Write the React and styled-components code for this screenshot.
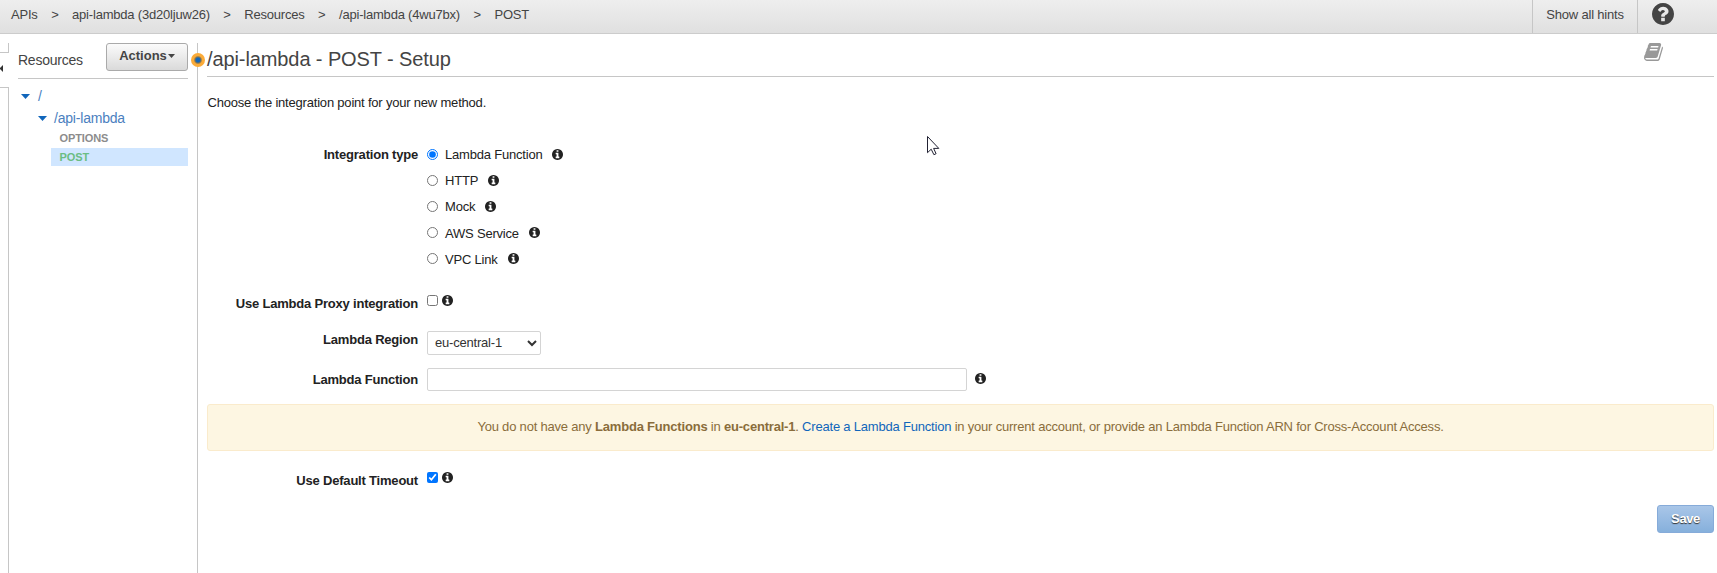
import React from "react";
import styled, { createGlobalStyle } from "styled-components";

const Global = createGlobalStyle`
  * { box-sizing: border-box; }
  html, body { margin: 0; height: 100%; background: #fff; overflow: hidden; }
  body { font: 13px/18px "Liberation Sans", Arial, sans-serif; letter-spacing: -0.2px; color: #222; }
`;

const Page = styled.div`
  height: 573px;
  display: flex;
  flex-direction: column;
`;

const TopBar = styled.header`
  height: 34px;
  flex: none;
  display: flex;
  align-items: stretch;
  background: linear-gradient(#eee, #e0e0e0);
  border-bottom: 1px solid #ccc;
  color: #444;
`;

const Crumbs = styled.nav`
  flex: 1;
  display: flex;
  gap: 13.5px;
  padding: 6px 0 0 11px;
`;

const Hints = styled.div`
  width: 106px;
  border: solid #c6c6c6;
  border-width: 0 1px;
  padding-top: 6px;
  text-align: center;
`;

const Help = styled.div`
  width: 79px;
  padding: 3px 0 0 14px;
  color: #444;
`;

const Icon = styled.svg`
  display: block;
  flex: none;
  width: ${(p) => p.$w}px;
  height: ${(p) => p.$h || p.$w}px;
  fill: currentColor;
`;

const Body = styled.div`
  flex: 1;
  display: flex;
  padding-top: 9px;
`;

const Rail = styled.div`
  width: 9px;
  flex: none;
  display: flex;
  flex-direction: column;
`;

const RailTop = styled.div`
  height: 10px;
  border: solid #c6c6c6;
  border-width: 0 1px 1px 0;
`;

const RailGap = styled.div`
  height: 34px;
  padding-bottom: 4px;
  display: flex;
  align-items: center;
  color: #333;
`;

const RailRest = styled.div`
  flex: 1;
  border: solid #c6c6c6;
  border-width: 1px 1px 0 0;
`;

const Sidebar = styled.aside`
  width: 189px;
  flex: none;
  padding: 0 9px;
  border-right: 1px solid #c6c6c6;
  position: relative;
`;

const SideHead = styled.div`
  height: 36px;
  display: flex;
  justify-content: space-between;
  border-bottom: 1px solid #c6c6c6;
`;

const SideTitle = styled.div`
  padding-top: 8px;
  font-size: 14px;
  letter-spacing: -0.25px;
  color: #444;
`;

const ActionsButton = styled.button`
  width: 82px;
  height: 28px;
  padding: 0 0 3px;
  display: flex;
  align-items: center;
  justify-content: center;
  gap: 1px;
  font: bold 13px "Liberation Sans", Arial, sans-serif;
  letter-spacing: 0;
  color: #444;
  border: 1px solid #aaa;
  border-radius: 3px;
  background: linear-gradient(#fbfbfb, #dadada);
`;

const SplitHandle = styled.span`
  position: absolute;
  right: -8px;
  top: 10px;
  width: 14px;
  height: 14px;
  border-radius: 50%;
  background: radial-gradient(circle, #1166bb 0 2px, #7d7357 3px, #fbab38 4.4px);
`;

const Tree = styled.div`
  padding-top: 6px;
`;

const TreeNode = styled.div`
  height: 22px;
  padding-left: ${(p) => 3 + p.$depth * 17}px;
  display: flex;
  align-items: center;
  gap: ${(p) => 8 - p.$depth}px;
  font-size: 14px;
  letter-spacing: -0.2px;
  color: #4b80c0;
`;

const Method = styled.div`
  height: ${(p) => (p.$selected ? 18 : 19)}px;
  margin-left: 33px;
  padding-left: 8.5px;
  font: bold 11px/18px "Liberation Sans", Arial, sans-serif;
  letter-spacing: -0.1px;
  color: ${(p) => (p.$selected ? "#6bbd83" : "#8c8c8c")};
  background: ${(p) => (p.$selected ? "#d0e6ff" : "none")};
`;

const Main = styled.main`
  flex: 1;
  min-width: 0;
  padding: 0 3px 0 9px;
`;

const TitleRow = styled.div`
  height: 34px;
  display: flex;
  justify-content: space-between;
  border-bottom: 1px solid #c6c6c6;
  color: #999;
`;

const Title = styled.h1`
  margin: 0;
  padding-top: 4px;
  font-size: 20px;
  line-height: 24px;
  font-weight: normal;
  letter-spacing: -0.1px;
  color: #444;
`;

const BookSlot = styled.div`
  padding-right: 51px;
`;

const Intro = styled.p`
  margin: 17px 0 34px;
  padding-left: 0.5px;
`;

const Field = styled.div`
  display: grid;
  grid-template-columns: 211px 1fr;
  column-gap: 9px;
  height: ${(p) => p.$h}px;
`;

const Label = styled.div`
  text-align: right;
  font-weight: bold;
  color: #222;
  padding-top: ${(p) => p.$top || 0}px;
`;

const Options = styled.div`
  display: flex;
  flex-direction: column;
  gap: 8.2px;
`;

const Option = styled.label`
  height: 18px;
  display: flex;
  align-items: center;
`;

const OptionText = styled.span`
  margin: 0 10px 0 7px;
`;

const OptionHint = styled.span`
  padding-bottom: 2px;
`;

const Control = styled.div`
  display: flex;
  align-items: flex-start;
  gap: ${(p) => p.$gap || 4}px;
  padding-top: ${(p) => p.$top || 0}px;
`;

const Radio = styled.input`
  width: 11px;
  height: 11px;
  margin: 0 0 2px;
`;

const Check = styled.input`
  width: 11px;
  height: 11px;
  margin: 0;
`;

const Select = styled.select`
  width: 114px;
  height: 24px;
  padding: 0 0 1px 3px;
  border: 1px solid #d4d4d4;
  border-radius: 2px;
  background: #fff;
  color: #333;
  font: 13px "Liberation Sans", Arial, sans-serif;
  letter-spacing: -0.2px;
`;

const TextInput = styled.input`
  width: 540px;
  height: 23px;
  border: 1px solid #d4d4d4;
  border-radius: 2px;
`;

const IconOffset = styled.span`
  padding-top: ${(p) => p.$top}px;
`;

const Alert = styled.div`
  height: 47px;
  padding-top: 13px;
  text-align: center;
  color: #8a6d3b;
  background: #fdf6e2;
  border: 1px solid #faebcc;
  border-radius: 3px;
  margin-bottom: 21px;
`;

const Link = styled.a`
  color: #1166bb;
`;

const Footer = styled.div`
  display: flex;
  justify-content: flex-end;
`;

const SaveButton = styled.button`
  width: 57px;
  height: 28px;
  padding: 0 0 1px;
  border: 1px solid #86abd9;
  border-radius: 3px;
  background: linear-gradient(#a9c6e8, #86b0dc);
  color: #fff;
  font: bold 13px "Liberation Sans", Arial, sans-serif;
  letter-spacing: -0.4px;
  text-shadow: 0 1px 1px #333;
`;

const Pointer = styled.svg`
  position: absolute;
  left: 927px;
  top: 136px;
  width: 13px;
  height: 20px;
`;

const DISC =
  "M1664 896q0 209-103 385.5t-279.5 279.5-385.5 103-385.5-103-279.5-279.5-103-385.5 103-385.5 279.5-279.5 385.5-103 385.5 103 279.5 279.5 103 385.5z";

const Info = () => (
  <Icon $w={11} viewBox="128 128 1536 1536">
    <path
      fillRule="evenodd"
      d={
        "M1152 1376v-160q0-14-9-23t-23-9h-96v-512q0-14-9-23t-23-9h-320q-14 0-23 9t-9 23v160q0 14 9 23t23 9h96v320h-96q-14 0-23 9t-9 23v160q0 14 9 23t23 9h448q14 0 23-9t9-23zM1024 480v-160q0-14-9-23t-23-9h-192q-14 0-23 9t-9 23v160q0 14 9 23t23 9h192q14 0 23-9t9-23z" +
        DISC
      }
    />
  </Icon>
);

const Question = () => (
  <Icon $w={22} viewBox="128 128 1536 1536">
    <path
      fillRule="evenodd"
      d={
        "M1024 1376v-192q0-14-9-23t-23-9h-192q-14 0-23 9t-9 23v192q0 14 9 23t23 9h192q14 0 23-9t9-23zM1280 704q0-88-55.5-163t-138.5-116-170-41q-243 0-371 213-15 24 8 42l132 100q7 6 19 6 16 0 25-12 53-68 86-92 34-24 86-24 48 0 85.5 26t37.5 59q0 38-20 61t-68 45q-63 28-115.5 86.5t-52.5 125.5v36q0 14 9 23t23 9h192q14 0 23-9t9-23q0-19 21.5-49.5t54.5-49.5q32-18 49-28.5t46-35 44.5-48 28-60.5 12.5-81z" +
        DISC
      }
    />
  </Icon>
);

const Book = () => (
  <Icon $w={19} $h={18} viewBox="62 128 1672 1536" preserveAspectRatio="none">
    <path d="M1703 478q40 57 18 129l-275 906q-19 64-76.5 107.5t-122.5 43.5h-923q-77 0-148.5-53.5t-99.5-131.5q-24-67-2-127 0-4 3-27t4-37q1-8-3-21.5t-3-19.5q2-11 8-21t16.5-23.5 16.5-23.5q23-38 45-91.5t30-91.5q3-10 .5-30t-.5-28q3-11 17-28t17-23q21-36 42-92t25-90q1-9-2.5-32t.5-28q4-13 22-30.5t22-22.5q19-26 42.5-84.5t27.5-96.5q1-8-3-25.5t-2-26.5q2-8 9-18t18-23 17-21q8-12 16.5-30.5t15-35 16-36 19.5-32 26.5-23.5 36-11.5 47.5 5.5l-1 3q38-9 51-9h761q74 0 114 56t18 130l-274 906q-36 119-71.5 153.5t-128.5 34.5h-869q-27 0-38 15-11 16-1 43 24 70 144 70h923q29 0 56-15.5t35-41.5l300-987q7-22 5-57 38 15 59 43zm-1064 2q-4 13 2 22.5t20 9.5h608q13 0 25.5-9.5t16.5-22.5l21-64q4-13-2-22.5t-20-9.5h-608q-13 0-25.5 9.5t-16.5 22.5zm-83 256q-4 13 2 22.5t20 9.5h608q13 0 25.5-9.5t16.5-22.5l21-64q4-13-2-22.5t-20-9.5h-608q-13 0-25.5 9.5t-16.5 22.5z" />
  </Icon>
);

const Caret = ({ w = 9, h = 5 }) => (
  <Icon $w={w} $h={h} viewBox="0 0 8 4" preserveAspectRatio="none">
    <path d="M0 0h8L4 4z" />
  </Icon>
);

const TreeCaret = styled.span`
  color: #1166bb;
`;

const crumbs = ["APIs", "api-lambda (3d20ljuw26)", "Resources", "/api-lambda (4wu7bx)", "POST"];
const types = ["Lambda Function", "HTTP", "Mock", "AWS Service", "VPC Link"];

export default function App() {
  return (
    <Page>
      <Global />
      <TopBar>
        <Crumbs>
          {crumbs.map((c, i) => (
            <React.Fragment key={c}>
              {i > 0 && <span>&gt;</span>}
              <span>{c}</span>
            </React.Fragment>
          ))}
        </Crumbs>
        <Hints>Show all hints</Hints>
        <Help>
          <Question />
        </Help>
      </TopBar>
      <Body>
        <Rail>
          <RailTop />
          <RailGap>
            <Icon $w={3} $h={7} viewBox="0 0 3 7">
              <path d="M3 0v7L0 4V3z" />
            </Icon>
          </RailGap>
          <RailRest />
        </Rail>
        <Sidebar>
          <SideHead>
            <SideTitle>Resources</SideTitle>
            <ActionsButton>
              Actions
              <Caret w={7} h={4} />
            </ActionsButton>
          </SideHead>
          <Tree>
            <TreeNode $depth={0}>
              <TreeCaret><Caret /></TreeCaret>/
            </TreeNode>
            <TreeNode $depth={1}>
              <TreeCaret><Caret /></TreeCaret>/api-lambda
            </TreeNode>
            <Method>OPTIONS</Method>
            <Method $selected>POST</Method>
          </Tree>
          <SplitHandle />
        </Sidebar>
        <Main>
          <TitleRow>
            <Title>/api-lambda - POST - Setup</Title>
            <BookSlot>
              <Book />
            </BookSlot>
          </TitleRow>
          <Intro>Choose the integration point for your new method.</Intro>
          <Field $h={149}>
            <Label>Integration type</Label>
            <Options>
              {types.map((t, i) => (
                <Option key={t}>
                  <Radio type="radio" name="type" defaultChecked={i === 0} />
                  <OptionText>{t}</OptionText>
                  <OptionHint><Info /></OptionHint>
                </Option>
              ))}
            </Options>
          </Field>
          <Field $h={36}>
            <Label>Use Lambda Proxy integration</Label>
            <Control>
              <Check type="checkbox" />
              <Info />
            </Control>
          </Field>
          <Field $h={37}>
            <Label>Lambda Region</Label>
            <Control>
              <Select defaultValue="eu-central-1">
                <option>eu-central-1</option>
              </Select>
            </Control>
          </Field>
          <Field $h={36}>
            <Label $top={3}>Lambda Function</Label>
            <Control $gap={8}>
              <TextInput type="text" />
              <IconOffset $top={5}><Info /></IconOffset>
            </Control>
          </Field>
          <Alert>
            You do not have any <b>Lambda Functions</b> in <b>eu-central-1</b>. <Link>Create a Lambda Function</Link> in
            your current account, or provide an Lambda Function ARN for Cross-Account Access.
          </Alert>
          <Field $h={33}>
            <Label>Use Default Timeout</Label>
            <Control>
              <Check type="checkbox" defaultChecked />
              <Info />
            </Control>
          </Field>
          <Footer>
            <SaveButton>Save</SaveButton>
          </Footer>
        </Main>
      </Body>
      <Pointer viewBox="0 0 13 20">
        <path d="M.5.5v16.2l3.7-3.5 2.7 5.5 2.2-1-2.5-5.3h5.2z" fill="#fff" stroke="#223" />
      </Pointer>
    </Page>
  );
}
